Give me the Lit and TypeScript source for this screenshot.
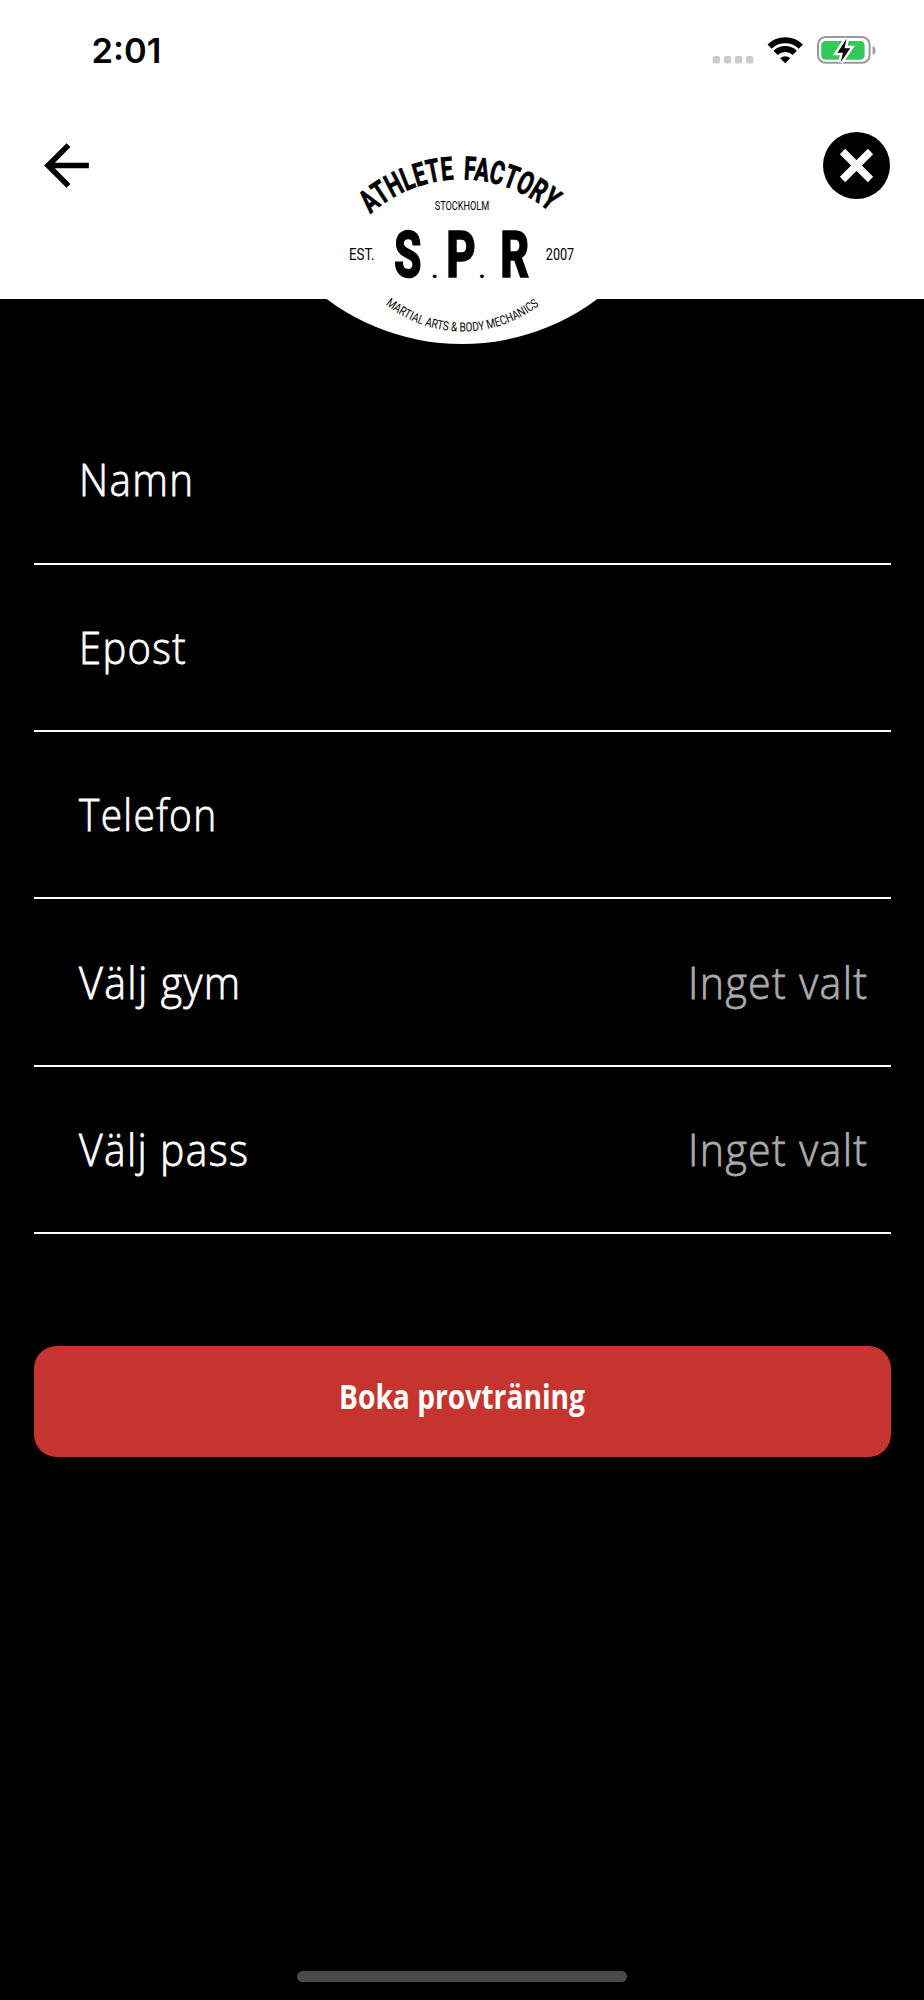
import { LitElement, html, css, nothing } from 'lit';
import { customElement, property } from 'lit/decorators.js';

interface FormField {
  label: string;
  labelWidth: number;
  value?: string;
}

const FIELDS: FormField[] = [
  { label: 'Namn', labelWidth: 115.5 },
  { label: 'Epost', labelWidth: 108 },
  { label: 'Telefon', labelWidth: 138.5 },
  { label: 'Välj gym', labelWidth: 162.5, value: 'Inget valt' },
  { label: 'Välj pass', labelWidth: 170.5, value: 'Inget valt' },
];

/* Text squeezed to a fixed advance width, stands in for a condensed face */
@customElement('fit-text')
export class FitText extends LitElement {
  static override styles = css`
    :host {
      display: block;
    }

    svg {
      display: block;
      overflow: visible;
    }

    text {
      fill: currentColor;
      stroke: currentColor;
      stroke-width: var(--fit-stroke, 0);
    }
  `;

  @property() text = '';
  @property({ type: Number }) width = 100;

  override render() {
    return html`
      <svg width=${this.width} height="60">
        <text x="0" y="45" textLength=${this.width} lengthAdjust="spacingAndGlyphs">${this.text}</text>
      </svg>
    `;
  }
}

@customElement('status-bar')
export class StatusBar extends LitElement {
  static override styles = css`
    :host {
      display: flex;
      justify-content: space-between;
      align-items: flex-start;
      height: 98px;
      padding: 30px 47px 0 91.5px;
      box-sizing: border-box;
    }

    .time {
      font: 600 34.5px/42px Inter, sans-serif;
      color: #000;
    }

    .indicators {
      display: block;
    }
  `;

  override render() {
    return html`
      <span class="time">2:01</span>
      <svg class="indicators" width="165" height="42" viewBox="712 30 165 42">
        <g fill="#ccc">
          <rect x="712.6" y="56" width="7.4" height="7.4" rx="2" />
          <rect x="723.8" y="56" width="7.4" height="7.4" rx="2" />
          <rect x="734.9" y="56" width="7.4" height="7.4" rx="2" />
          <rect x="746" y="56" width="7.4" height="7.4" rx="2" />
        </g>
        <g fill="none" stroke="#000" stroke-width="6">
          <path d="M769.6 46.6 A22.6 22.6 0 0 1 800.8 46.6" />
          <path d="M775.6 52.9 A14 14 0 0 1 794.8 52.9" />
        </g>
        <path d="M785.2 63.3 L780.2 58.2 A7.1 7.1 0 0 1 790.2 58.2 Z" />
        <rect x="818" y="37" width="51.6" height="25.8" rx="7.6" fill="none" stroke="#999" stroke-width="2" />
        <path d="M872.6 46 a4.8 4.8 0 0 1 0 8.8 Z" fill="#999" />
        <rect x="821.2" y="41" width="43.4" height="18.8" rx="4.4" fill="#34c759" />
        <path
          d="M846.6 38.8 L837.4 52.8 H843 L840.7 62.2 L850.2 48.3 H844.5 Z"
          stroke="#fff"
          stroke-width="5"
          paint-order="stroke"
        />
      </svg>
    `;
  }
}

@customElement('club-logo')
export class ClubLogo extends LitElement {
  static override styles = css`
    :host {
      display: block;
    }

    svg {
      display: block;
    }

    text {
      font-family: Roboto, sans-serif;
      fill: #000;
    }

    .name {
      font-size: 32px;
      font-weight: 700;
      word-spacing: 6px;
      stroke: #000;
      stroke-width: 0.8px;
    }

    .city {
      font-size: 12.4px;
    }

    .side {
      font-size: 17px;
    }

    .letter {
      font-size: 64.5px;
      font-weight: 800;
      stroke: #000;
      stroke-width: 1.5px;
    }

    .dot {
      font-size: 24px;
      font-weight: 700;
    }

    .motto {
      font-size: 12.6px;
    }
  `;

  override render() {
    return html`
      <svg width="304" height="214" viewBox="310 130 304 214" role="img" aria-label="Athlete Factory">
        <defs>
          <path id="top" d="M370.5 214 A136 136 0 0 1 552 214" />
          <path id="bottom" d="M385.5 304.5 A124 124 0 0 0 540 304.5" />
          <clipPath id="below">
            <rect x="310" y="299" width="304" height="45" />
          </clipPath>
        </defs>
        <circle cx="462" cy="118" r="226" fill="#fff" clip-path="url(#below)" />
        <text class="name">
          <textPath href="#top" textLength="195" lengthAdjust="spacingAndGlyphs">ATHLETE FACTORY</textPath>
        </text>
        <text class="city" x="434.8" y="209.6" textLength="54.5" lengthAdjust="spacingAndGlyphs">STOCKHOLM</text>
        <text class="side" x="349" y="259.7" textLength="25.5" lengthAdjust="spacingAndGlyphs">EST.</text>
        <text class="side" x="545.8" y="259.7" textLength="28.4" lengthAdjust="spacingAndGlyphs">2007</text>
        <text class="letter" x="394" y="276.6" textLength="27.5" lengthAdjust="spacingAndGlyphs">S</text>
        <text class="dot" x="431.2" y="277.6">.</text>
        <text class="letter" x="446.3" y="276.6" textLength="29.5" lengthAdjust="spacingAndGlyphs">P</text>
        <text class="dot" x="478.6" y="277.6">.</text>
        <text class="letter" x="500.3" y="276.6" textLength="29" lengthAdjust="spacingAndGlyphs">R</text>
        <text class="motto">
          <textPath href="#bottom" textLength="165.5" lengthAdjust="spacingAndGlyphs">MARTIAL ARTS &amp; BODY MECHANICS</textPath>
        </text>
      </svg>
    `;
  }
}

@customElement('app-root')
export class AppRoot extends LitElement {
  static override styles = css`
    :host {
      display: flex;
      flex-direction: column;
      width: 924px;
      height: 2000px;
      background: #000;
      overflow: hidden;
    }

    .header {
      height: 299.4px;
      background: #fff;
      flex: none;
    }

    .nav {
      display: grid;
      grid-template-columns: 1fr 304px 1fr;
      align-items: start;
      padding: 32px 33.5px 0;
    }

    .icon-button {
      display: block;
      width: 67px;
      height: 67px;
      padding: 0;
      border: 0;
      background: none;
      margin-top: 2px;
    }

    .icon-button svg {
      display: block;
      margin-left: -0.5px;
    }

    .close {
      justify-self: end;
    }

    .form {
      display: flex;
      flex-direction: column;
      margin: 97.9px 33.5px 0;
    }

    .field {
      display: flex;
      justify-content: space-between;
      box-sizing: border-box;
      height: 167.4px;
      padding: 54.2px 22.5px 0 45.5px;
      border-bottom: 2.25px solid #fff;
      color: #fff;
      font: 300 44.5px 'Open Sans', sans-serif;
      letter-spacing: 1.5px;
      --fit-stroke: 0.8px;
    }

    .value {
      color: #aaa;
    }

    .submit {
      display: flex;
      justify-content: center;
      height: 111.5px;
      margin: 111.7px 0 0;
      padding: 18.2px 0 0;
      border: 0;
      border-radius: 22.5px;
      background: #c63430;
      color: #fff;
      font: 700 33.5px 'Open Sans', sans-serif;
    }

    .home-indicator {
      width: 330px;
      height: 11px;
      margin: auto auto 18px;
      border-radius: 5.5px;
      background: #4a4a4a;
    }
  `;

  override render() {
    return html`
      <header class="header">
        <status-bar></status-bar>
        <nav class="nav">
          <button class="icon-button" aria-label="Tillbaka">
            <svg width="67" height="67" viewBox="0 0 24 24">
              <path d="M20 11H7.83l5.59-5.59L12 4l-8 8 8 8 1.41-1.41L7.83 13H20v-2z" />
            </svg>
          </button>
          <club-logo></club-logo>
          <button class="icon-button close" aria-label="Stäng">
            <svg width="67" height="67" viewBox="0 0 67 67">
              <circle cx="33.5" cy="33.5" r="33.5" />
              <path d="M19.5 19.5l28 28M47.5 19.5l-28 28" stroke="#fff" stroke-width="7.5" />
            </svg>
          </button>
        </nav>
      </header>
      <main class="form">
        ${FIELDS.map(
          (field) => html`
            <div class="field">
              <fit-text .text=${field.label} .width=${field.labelWidth}></fit-text>
              ${field.value ? html`<fit-text class="value" .text=${field.value} .width=${180.5}></fit-text>` : nothing}
            </div>
          `
        )}
        <button class="submit">
          <fit-text .text=${'Boka provträning'} .width=${246}></fit-text>
        </button>
      </main>
      <div class="home-indicator"></div>
    `;
  }
}
